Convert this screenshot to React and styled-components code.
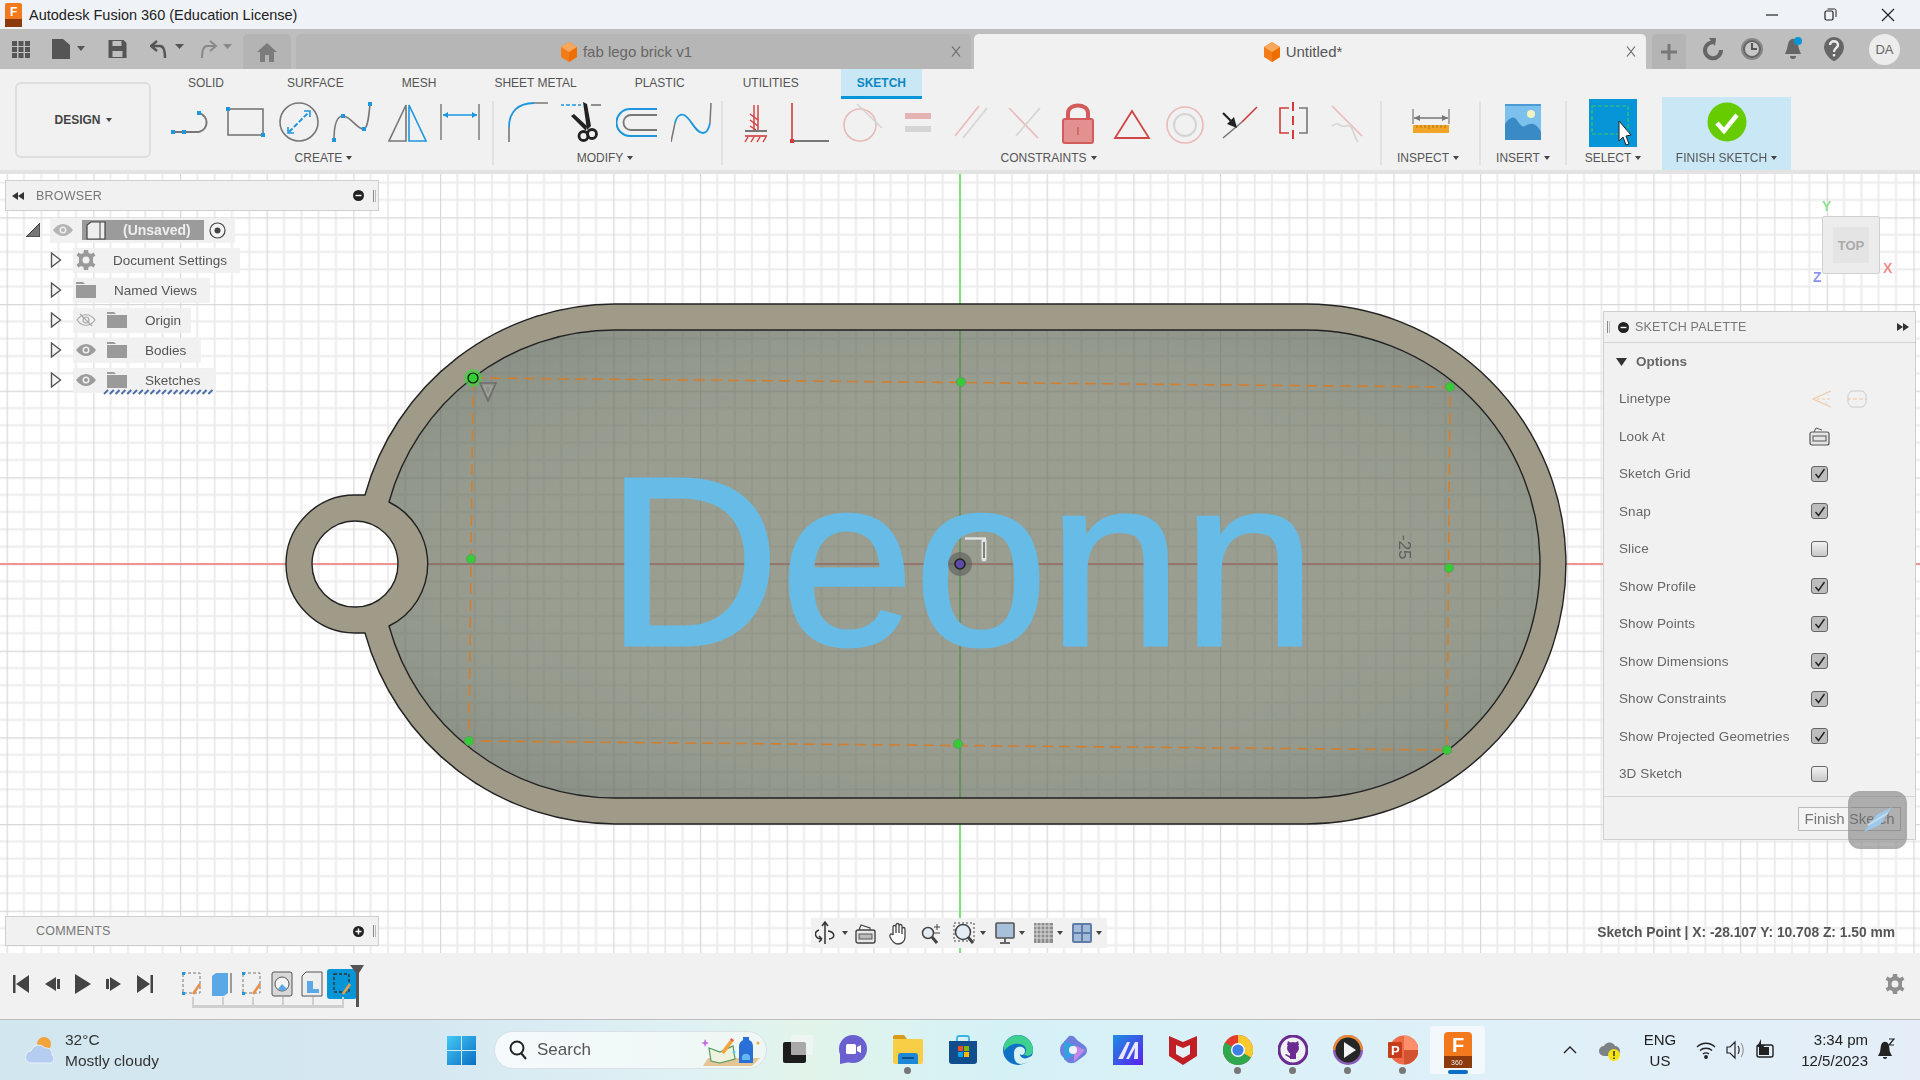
import React from "react";
import styled, { createGlobalStyle } from "styled-components";

const Reset = createGlobalStyle`
  html, body { margin: 0; padding: 0; width: 1920px; height: 1080px; overflow: hidden; }
  body { font-family: "Liberation Sans", Arial, sans-serif; color: #444; }
  * { box-sizing: border-box; }
`;

const Page = styled.div`
  width: 1920px;
  height: 1080px;
  display: flex;
  flex-direction: column;
`;

/* ---------- title bar ---------- */
const TitleBar = styled.div`
  height: 29px;
  flex: none;
  background: #eff3f8;
  display: flex;
  align-items: center;
  padding-left: 5px;
`;
const TitleText = styled.div`
  margin-left: 7px;
  font-size: 14.5px;
  color: #222;
`;
const WindowButtons = styled.div`
  margin-left: auto;
  padding-right: 3px;
  display: flex;
`;
const WindowButton = styled.div`
  width: 58px;
  height: 29px;
  display: flex;
  align-items: center;
  justify-content: center;
`;

/* ---------- document tabs ---------- */
const TabBar = styled.div`
  height: 40px;
  flex: none;
  background: #bebebe;
  display: flex;
  align-items: flex-end;
`;
const QuickTools = styled.div`
  width: 243px;
  height: 40px;
  flex: none;
  display: flex;
  align-items: center;
  padding-left: 12px;
`;
const QuickTool = styled.div`
  display: flex;
  align-items: center;
  margin-right: ${(p) => p.$gap || 0}px;
`;
const HomeTab = styled.div`
  width: 48px;
  height: 35px;
  background: #b4b4b4;
  border-radius: 5px 5px 0 0;
  margin-right: 5px;
  display: flex;
  align-items: center;
  justify-content: center;
`;
const DocTab = styled.div`
  width: ${(p) => p.$w}px;
  height: 35px;
  margin-right: ${(p) => p.$mr}px;
  padding-right: 15px;
  border-radius: 5px 5px 0 0;
  background: ${(p) => (p.$active ? "#f1f1f1" : "#b6b6b6")};
  color: ${(p) => (p.$active ? "#555" : "#666")};
  font-size: 15px;
  position: relative;
  display: flex;
  align-items: center;
  justify-content: center;
  gap: 5px;
`;
const TabClose = styled.span`
  position: absolute;
  right: 10px;
  top: 12px;
  display: flex;
`;
const NewTab = styled.div`
  width: 34px;
  height: 35px;
  background: #b4b4b4;
  border-radius: 4px 4px 0 0;
  margin-right: 4px;
  display: flex;
  align-items: center;
  justify-content: center;
`;
const TopIcons = styled.div`
  height: 40px;
  display: flex;
  align-items: center;
`;
const TopIcon = styled.div`
  width: 41px;
  display: flex;
  justify-content: center;
`;
const Avatar = styled.div`
  width: 31px;
  height: 31px;
  margin-left: 15px;
  border-radius: 50%;
  background: #ececec;
  color: #666;
  font-size: 13px;
  display: flex;
  align-items: center;
  justify-content: center;
`;

/* ---------- ribbon ---------- */
const Ribbon = styled.div`
  height: 105px;
  flex: none;
  background: #f1f1f1;
  border-bottom: 4px solid #e3e3e3;
  display: flex;
  padding-left: 15px;
`;
const DesignButton = styled.div`
  width: 136px;
  height: 76px;
  margin-top: 13px;
  border: 2px solid #dedede;
  border-radius: 6px;
  display: flex;
  align-items: center;
  justify-content: center;
  gap: 5px;
  font-size: 12px;
  font-weight: bold;
  color: #444;
`;
const RibbonMain = styled.div`
  margin-left: 14px;
  display: flex;
  flex-direction: column;
`;
const RibbonTabs = styled.div`
  height: 30px;
  display: flex;
  gap: 26px;
  padding-left: 7px;
`;
const RibbonTab = styled.div`
  height: 30px;
  padding: 0 16px;
  display: flex;
  align-items: center;
  font-size: 12px;
  color: ${(p) => (p.$active ? "#0c87c4" : "#555")};
  font-weight: ${(p) => (p.$active ? "bold" : "normal")};
  background: ${(p) => (p.$active ? "#c9e7f5" : "transparent")};
  border-bottom: 3px solid ${(p) => (p.$active ? "#0696d7" : "transparent")};

  &:first-child {
    margin-right: 5px;
  }
`;
const Groups = styled.div`
  height: 71px;
  display: flex;
`;
const Group = styled.div`
  width: ${(p) => p.$w}px;
  margin-left: ${(p) => p.$ml || 0}px;
  display: flex;
  flex-direction: column;
  ${(p) => p.$highlight && "background: #c9e7f5; margin-top: -2px; height: 73px; padding-top: 2px;"}
`;
const IconRow = styled.div`
  height: 48px;
  display: flex;
  justify-content: ${(p) => (p.$pad === undefined ? "center" : "flex-start")};
  padding-left: ${(p) => p.$pad || 0}px;
`;
const IconCell = styled.div`
  width: ${(p) => p.$w}px;
  display: flex;
  justify-content: center;
  padding-top: 1px;
`;
const GroupLabel = styled.div`
  flex: 1;
  display: flex;
  align-items: center;
  justify-content: center;
  gap: 4px;
  padding: 0 ${(p) => p.$pr || 0}px 2px 0;
  font-size: 12px;
  color: #555;
`;
const Caret = styled.span`
  width: 0;
  height: 0;
  border-left: 3.5px solid transparent;
  border-right: 3.5px solid transparent;
  border-top: 4.5px solid ${(p) => p.$color || "#444"};
  display: inline-block;
  margin-left: ${(p) => p.$ml || 0}px;
`;
const GroupDivider = styled.div`
  width: 2px;
  height: 64px;
  margin-left: ${(p) => p.$ml || 0}px;
  background: #e1e1e1;
  flex: none;
  margin-top: 2px;
`;

/* ---------- viewport ---------- */
const Viewport = styled.div`
  flex: 1;
  position: relative;
  background: #fff;
  overflow: hidden;
`;
const Scene = styled.svg`
  display: block;
`;
const Panel = styled.div`
  position: absolute;
  left: 5px;
  top: ${(p) => p.$top}px;
  width: 374px;
  height: ${(p) => p.$h}px;
  background: #f1f1f1;
  border: 1px solid #cfcfcf;
  display: flex;
  align-items: center;
  font-size: 12.5px;
  color: #777;
  padding: 0 2px 0 ${(p) => p.$pl}px;
`;
const PanelTitle = styled.span`
  margin-left: ${(p) => p.$ml || 0}px;
  flex: 1;
  letter-spacing: 0.2px;
`;
const Grip = styled.span`
  width: 3px;
  height: 12px;
  margin-left: 9px;
  border-left: 1px solid #888;
  border-right: 1px solid #bbb;
`;
const Tree = styled.div`
  position: absolute;
  left: 0;
  top: 41px;
  display: flex;
  flex-direction: column;
`;
const TreeRow = styled.div`
  height: 30px;
  display: flex;
  align-items: center;
  padding-left: ${(p) => p.$pl}px;
`;
const TreePill = styled.div`
  height: 25px;
  width: ${(p) => p.$w}px;
  margin-left: ${(p) => p.$ml}px;
  background: rgba(240, 240, 240, 0.92);
  display: flex;
  align-items: center;
  padding-left: 3px;
  gap: 11px;
  position: relative;
`;
const TreeLabel = styled.span`
  font-size: 13.5px;
  color: #555;
  margin-left: ${(p) => p.$ml}px;
`;
const RootBox = styled.div`
  width: 122px;
  height: 20px;
  margin-left: -2px;
  background: #9b9b9b;
  display: flex;
  align-items: center;
  padding-left: 4px;
  color: #eee;
  font-size: 14px;
  font-weight: bold;
  gap: 17px;
`;
const Squiggle = styled.svg`
  position: absolute;
  left: 30px;
  bottom: -2px;
`;
const NavCube = styled.div`
  position: absolute;
  left: 1822px;
  top: 42px;
  width: 58px;
  height: 58px;
  background: #ececec;
  border: 1px solid #d0d0d0;
  border-radius: 2px;
  display: flex;
  align-items: center;
  justify-content: center;
  font-size: 13px;
  font-weight: bold;
  color: #aaa;
`;
const CubeFace = styled.div`
  width: 36px;
  height: 36px;
  background: #e4e4e4;
  display: flex;
  align-items: center;
  justify-content: center;
`;
const AxisLetter = styled.span`
  position: absolute;
  left: ${(p) => p.$x}px;
  top: ${(p) => p.$y}px;
  font-size: 14px;
  font-weight: bold;
  color: ${(p) => p.$color};
`;
const Palette = styled.div`
  position: absolute;
  left: 1603px;
  top: 137px;
  width: 313px;
  height: 529px;
  background: #f1f1f1;
  border: 1px solid #cfcfcf;
  display: flex;
  flex-direction: column;
  color: #666;
`;
const PaletteHead = styled.div`
  height: 31px;
  flex: none;
  display: flex;
  align-items: center;
  padding: 0 6px 0 3px;
  border-bottom: 1px solid #d4d4d4;
  font-size: 12.5px;
  color: #777;
  letter-spacing: 0.2px;
`;
const OptionsHead = styled.div`
  height: 37px;
  flex: none;
  display: flex;
  align-items: center;
  padding-left: 12px;
  gap: 9px;
  font-size: 13.5px;
  font-weight: bold;
  color: #666;
`;
const OptionRow = styled.div`
  height: 37.5px;
  flex: none;
  display: flex;
  align-items: center;
  padding-left: 15px;
  font-size: 13.5px;
  letter-spacing: 0.1px;
  color: #666;
`;
const OptionLabel = styled.span`
  width: 192px;
  flex: none;
`;
const CheckBox = styled.span`
  width: 17px;
  height: 16px;
  border: 1px solid #666;
  border-radius: 3px;
  background: ${(p) => (p.$on ? "#bdbdbd" : "linear-gradient(#f2f2f2, #c8c8c8)")};
  display: flex;
  align-items: center;
  justify-content: center;
`;
const PaletteFoot = styled.div`
  flex: 1;
  margin-top: 3px;
  border-top: 1px solid #d4d4d4;
  display: flex;
  justify-content: flex-end;
  padding: 10px 14px 0 0;
`;
const FinishButton = styled.div`
  width: 103px;
  height: 24px;
  background: #f4f4f4;
  border: 1px solid #bbb;
  font-size: 15px;
  color: #777;
  display: flex;
  align-items: center;
  justify-content: center;
`;
const MarkingBadge = styled.div`
  position: absolute;
  left: 1848px;
  top: 617px;
  width: 59px;
  height: 58px;
  border-radius: 12px;
  background: rgba(105, 105, 105, 0.5);
  border: 3px solid rgba(170, 170, 170, 0.5);
  display: flex;
  align-items: center;
  justify-content: center;
`;
const NavBar = styled.div`
  position: absolute;
  left: 811px;
  top: 744px;
  width: 296px;
  height: 30px;
  background: #f1f1f1;
  display: flex;
  align-items: center;
  padding-left: 4px;
`;
const NavItem = styled.div`
  width: ${(p) => p.$w}px;
  flex: none;
  display: flex;
  align-items: center;
  gap: ${(p) => p.$gap || 4}px;
`;
const StatusText = styled.div`
  position: absolute;
  right: 25px;
  top: 751px;
  font-size: 13.8px;
  font-weight: bold;
  color: #555;
`;

/* ---------- timeline ---------- */
const Timeline = styled.div`
  height: 67px;
  flex: none;
  background: #f1f1f1;
  border-bottom: 1px solid #bdbdbd;
  display: flex;
  align-items: center;
  position: relative;
  padding: 0 15px 4px 5px;
`;
const PlayCell = styled.div`
  width: 31px;
  display: flex;
  justify-content: center;
`;
const Features = styled.div`
  margin-left: 17px;
  display: flex;
`;
const Feature = styled.div`
  width: 30px;
  height: 30px;
  display: flex;
  align-items: center;
  justify-content: center;
  background: ${(p) => (p.$active ? "#0696d7" : "transparent")};
  border-radius: ${(p) => (p.$active ? "3px" : 0)};
`;
const Bracket = styled.div`
  position: absolute;
  left: 192px;
  top: 44px;
  width: 152px;
  height: 11px;
  border-bottom: 3px solid #cfcfcf;
  background: repeating-linear-gradient(90deg, #cfcfcf 0 2px, transparent 2px 30px);
`;
const PlayHead = styled.svg`
  position: absolute;
  left: 350px;
  top: 12px;
`;
const TimelineGear = styled.div`
  margin-left: auto;
  display: flex;
`;

/* ---------- taskbar ---------- */
const Taskbar = styled.div`
  height: 60px;
  flex: none;
  background: linear-gradient(90deg, #d2e6f0 0%, #d5e8f2 22%, #dff1f3 36%, #e2f4ea 42%, #d4f1f6 52%, #dcf0f8 70%, #e5eef8 100%);
  display: flex;
  align-items: center;
  color: #222;
`;
const Weather = styled.div`
  width: 447px;
  flex: none;
  display: flex;
  align-items: center;
  padding-left: 25px;
  gap: 8px;
`;
const WeatherText = styled.div`
  font-size: 15.5px;
  line-height: 21px;
  color: #333;
`;
const SearchPill = styled.div`
  width: 273px;
  height: 38px;
  margin: 0 3px 0 18px;
  border-radius: 19px;
  background: linear-gradient(90deg, #f5fafc, #eef7f4);
  border: 1px solid #d8e2e6;
  display: flex;
  align-items: center;
  padding-left: 14px;
  gap: 10px;
  font-size: 17px;
  color: #555;
  position: relative;
`;
const SearchArt = styled.svg`
  position: absolute;
  right: 0;
  top: 1px;
`;
const TaskCell = styled.div`
  width: 55px;
  height: 48px;
  flex: none;
  display: flex;
  align-items: center;
  justify-content: center;
  position: relative;
  border-radius: 4px;
  background: ${(p) => (p.$active ? "#f2f8fb" : "transparent")};
  ${(p) =>
    p.$dot &&
    `&::after {
      content: "";
      position: absolute;
      bottom: 0;
      left: 50%;
      width: ${p.$active ? 20 : 7}px;
      height: ${p.$active ? 4 : 7}px;
      margin-left: ${p.$active ? -10 : -3.5}px;
      border-radius: 4px;
      background: ${p.$active ? "#0a6fc4" : "#777"};
    }`}
`;
const Tray = styled.div`
  width: 370px;
  margin-left: auto;
  flex: none;
  display: flex;
  align-items: center;
`;
const TrayCell = styled.div`
  width: ${(p) => p.$w}px;
  flex: none;
  display: flex;
  flex-direction: column;
  align-items: ${(p) => p.$align || "center"};
  justify-content: center;
  font-size: 15px;
  line-height: 21px;
  color: #222;
`;

/* ---------- drawings ---------- */
const Ico = ({ w = 44, h = 44, children, vb }) => (
  <svg width={w} height={h} viewBox={vb || `0 0 ${w} ${h}`} fill="none">
    {children}
  </svg>
);
const BLUE = "#1e96e0";
const GREY = "#777";
const Dot = ({ x, y }) => <rect x={x - 2} y={y - 2} width="4" height="4" fill={BLUE} />;

const LineIcon = () => (
  <Ico>
    <path d="M3 32H29" stroke={GREY} strokeWidth="2" />
    <path d="M29 13A11 10 0 0 1 29 32" stroke={GREY} strokeWidth="2" />
    <Dot x={3} y={32} /><Dot x={14} y={32} /><Dot x={29} y={13} />
  </Ico>
);
const RectIcon = () => (
  <Ico>
    <rect x="4" y="9" width="35" height="26" stroke={GREY} strokeWidth="1.6" />
    <Dot x={4} y={9} /><Dot x={39} y={35} />
  </Ico>
);
const CircleIcon = () => (
  <Ico>
    <circle cx="22" cy="22" r="19" stroke={GREY} strokeWidth="1.6" />
    <path d="M12 32L32 12" stroke={BLUE} strokeWidth="2" strokeDasharray="5 2" />
    <path d="M27 11H33V17M11 27V33H17" stroke={BLUE} strokeWidth="1.6" />
  </Ico>
);
const SplineIcon = () => (
  <Ico>
    <path d="M3 40C3 24 6 16 12 16C20 16 26 30 33 29C37 28 38 14 39 4" stroke={GREY} strokeWidth="1.6" />
    <Dot x={3} y={40} /><Dot x={12} y={16} /><Dot x={33} y={29} /><Dot x={39} y={4} />
  </Ico>
);
const MirrorIcon = () => (
  <Ico>
    <path d="M21 5L4 41H21Z" stroke={GREY} strokeWidth="1.6" />
    <path d="M24 5L41 41H24Z" stroke={BLUE} strokeWidth="1.6" />
  </Ico>
);
const DimensionIcon = () => (
  <Ico>
    <path d="M3 4V40M41 4V40" stroke={GREY} strokeWidth="1.4" />
    <path d="M5 15H39" stroke={BLUE} strokeWidth="1.6" />
    <path d="M5 15L10 12V18ZM39 15L34 12V18Z" fill={BLUE} />
  </Ico>
);
const FilletIcon = () => (
  <Ico>
    <path d="M3 27V42M28 3H42" stroke={GREY} strokeWidth="1.6" />
    <path d="M3 27C3 12 12 3 28 3" stroke={BLUE} strokeWidth="1.8" />
  </Ico>
);
const TrimIcon = () => (
  <Ico>
    <path d="M-1 5H20" stroke={BLUE} strokeWidth="1.6" strokeDasharray="4 2" />
    <path d="M30 5H40" stroke={GREY} strokeWidth="1.6" />
    <path d="M22 2L26 4L30 26L26 30Z" fill="#222" />
    <path d="M10 16L13 14L26 26L25 31Z" fill="#222" />
    <circle cx="22.500" cy="36" r="4.500" stroke="#222" strokeWidth="2.8" />
    <circle cx="31" cy="34" r="4.500" stroke="#222" strokeWidth="2.8" />
  </Ico>
);
const OffsetIcon = () => (
  <Ico>
    <path d="M41 9H14A13.500 13.500 0 0 0 14 36H41" stroke={BLUE} strokeWidth="2" />
    <path d="M41 15H15A7.500 7.500 0 0 0 15 30H41" stroke={GREY} strokeWidth="1.8" />
  </Ico>
);
const SplineEditIcon = () => (
  <Ico>
    <path d="M0 42L4 23M39 23L40 3" stroke={GREY} strokeWidth="1.5" />
    <path d="M4 23C6 15 10 14 13 15C20 18 24 33 32 33C36 33 38 28 39 23" stroke={BLUE} strokeWidth="1.8" />
  </Ico>
);
const FixIcon = () => (
  <Ico>
    <path d="M20 5V30M24 5V30" stroke="#d43a3a" strokeWidth="1.4" />
    <path d="M16 14L24 20M16 20L24 26M16 26L22 30" stroke="#d43a3a" strokeWidth="1.4" />
    <path d="M11 31H33" stroke={GREY} strokeWidth="2" />
    <path d="M11 36H33" stroke="#d43a3a" strokeWidth="1.6" />
    <path d="M14 37L11 42M20 37L17 42M26 37L23 42M32 37L29 42" stroke="#d43a3a" strokeWidth="1.4" />
  </Ico>
);
const PerpIcon = () => (
  <Ico>
    <path d="M4 3V41" stroke="#d43a3a" strokeWidth="1.6" />
    <path d="M5 41H41" stroke={GREY} strokeWidth="2" />
    <rect x="2" y="39" width="4" height="4" fill="#d43a3a" />
  </Ico>
);
const TangentIcon = () => (
  <Ico>
    <circle cx="19" cy="25" r="16" stroke="#eab9b9" strokeWidth="1.6" />
    <path d="M16 4L41 28" stroke="#d4d4d4" strokeWidth="1.6" />
  </Ico>
);
const EqualIcon = () => (
  <Ico>
    <rect x="10" y="13" width="26" height="6" fill="#e5b3b3" />
    <rect x="10" y="26" width="26" height="6" fill="#d5d5d5" />
  </Ico>
);
const ParallelIcon = () => (
  <Ico>
    <path d="M6 36L30 6" stroke="#eab9b9" strokeWidth="1.6" />
    <path d="M14 38L38 8" stroke="#d4d4d4" strokeWidth="1.6" />
  </Ico>
);
const CrossIcon = () => (
  <Ico>
    <path d="M7 8L36 38" stroke="#eab9b9" strokeWidth="1.6" />
    <path d="M38 8L14 36" stroke="#d4d4d4" strokeWidth="1.6" />
  </Ico>
);
const LockIcon = () => (
  <Ico>
    <path d="M12 20V13C12 3 32 3 32 13V20" stroke="#d35b5b" strokeWidth="4" />
    <rect x="7" y="19" width="30" height="24" rx="2" fill="#e29090" stroke="#d35b5b" strokeWidth="2" />
    <path d="M22 27V35" stroke="#c04a4a" strokeWidth="1" />
  </Ico>
);
const TriangleIcon = () => (
  <Ico>
    <path d="M22 11L39 38H5Z" stroke="#d04545" strokeWidth="1.8" />
  </Ico>
);
const ConcentricIcon = () => (
  <Ico>
    <circle cx="22" cy="25" r="18" stroke="#eab9b9" strokeWidth="1.6" />
    <circle cx="22" cy="25" r="11" stroke="#d4d4d4" strokeWidth="2" />
  </Ico>
);
const MidpointIcon = () => (
  <Ico>
    <path d="M6 38L25 22" stroke={GREY} strokeWidth="1.6" />
    <path d="M25 22L40 7" stroke="#d43a3a" strokeWidth="1.6" />
    <path d="M6 13L14 21" stroke="#222" strokeWidth="2.2" />
    <path d="M20 28L10 24L17 17Z" fill="#222" />
  </Ico>
);
const SymmetryIcon = () => (
  <Ico>
    <path d="M18 8H9V33H18" stroke="#d43a3a" strokeWidth="1.6" />
    <path d="M28 8H36V33H28" stroke={GREY} strokeWidth="1.6" />
    <path d="M22 2V42" stroke="#d43a3a" strokeWidth="2" strokeDasharray="9 5" />
  </Ico>
);
const CurvatureIcon = () => (
  <Ico>
    <path d="M8 6L38 36" stroke="#eab9b9" strokeWidth="1.6" />
    <path d="M8 26C16 20 14 28 22 26C30 24 28 34 34 42" stroke="#d4d4d4" strokeWidth="1.6" />
  </Ico>
);
const RulerIcon = () => (
  <Ico>
    <path d="M4 9V24M40 9V24" stroke={GREY} strokeWidth="1.2" />
    <path d="M5 18H39" stroke={GREY} strokeWidth="1.4" />
    <path d="M5 18L11 15V21ZM39 18L33 15V21Z" fill={GREY} />
    <rect x="4" y="25" width="36" height="8" fill="#f0a526" />
    <path d="M8 25V28M12 25V28M16 25V28M20 25V29M24 25V28M28 25V28M32 25V28M36 25V28" stroke="#9a6a10" strokeWidth=".8" />
  </Ico>
);
const PictureIcon = () => (
  <Ico>
    <rect x="4" y="4" width="36" height="36" fill="#7cc0ee" />
    <rect x="4" y="4" width="36" height="2" fill="#4d9bd6" />
    <circle cx="30" cy="14" r="4" fill="#f4f2c0" />
    <path d="M4 40V24C8 18 12 16 15 19C18 22 20 28 24 26C28 24 34 20 40 32V40Z" fill="#3a8ac6" />
  </Ico>
);
const SelectIcon = () => (
  <Ico w={48} h={48}>
    <rect x="0" y="0" width="48" height="48" fill="#0696d7" />
    <rect x="3" y="7" width="36" height="28" stroke="#3fc46a" strokeWidth="1.2" strokeDasharray="4 2" />
    <path d="M30 22V42L34 38L37 46L40 45L37 37L42 36Z" fill="#fff" stroke="#222" strokeWidth="1" />
  </Ico>
);
const FinishIcon = () => (
  <Ico w={40} h={44}>
    <circle cx="20" cy="22" r="19.500" fill="#66cc00" />
    <path d="M10 23L17 31L30 15" stroke="#fff" strokeWidth="4.5" />
  </Ico>
);

const Cube = ({ s = 20 }) => (
  <svg width={s * 0.9} height={s} viewBox="0 0 18 20">
    <path d="M9 0L17 5V15L9 20L1 15V5Z" fill="#f07d1a" />
    <path d="M9 10L17 5V15L9 20Z" fill="#ee6e00" />
    <path d="M9 0L17 5L9 10L1 5Z" fill="#f9a75c" />
  </svg>
);
const CloseX = () => (
  <svg width="10" height="11" viewBox="0 0 10 11">
    <path d="M1 0.5L9 10.5M9 0.5L1 10.5" stroke="#666" strokeWidth="1.2" />
  </svg>
);
const Eye = ({ off, c = "#9c9c9c" }) => (
  <svg width="20" height="14" viewBox="0 0 20 14" fill="none">
    {off ? (
      <>
        <path d="M1 7C6 0 14 0 19 7C14 14 6 14 1 7Z" stroke="#a8a8a8" strokeWidth="1.2" />
        <circle cx="10" cy="7" r="3" stroke="#a8a8a8" strokeWidth="1.2" />
        <path d="M4 1L16 13" stroke="#a8a8a8" strokeWidth="1.2" />
      </>
    ) : (
      <>
        <path d="M0 7C6 -1 14 -1 20 7C14 15 6 15 0 7Z" fill={c} />
        <circle cx="10" cy="7" r="3.500" fill="#eee" />
        <circle cx="10" cy="7" r="2" fill={c} />
      </>
    )}
  </svg>
);
const Folder = () => (
  <svg width="20" height="16" viewBox="0 0 20 16">
    <path d="M0 0H7L9 2H0ZM0 3H20V16H0Z" fill="#9a9a9a" />
  </svg>
);
const GearIcon = ({ s = 20, c = "#9a9a9a" }) => (
  <svg width={s} height={s} viewBox="0 0 20 20">
    <path
      fill={c}
      fillRule="evenodd"
      d="M8 0H12L12.600 3L15 4L17.600 2.400L19.400 5.400L17 7.200V12.800L19.400 14.600L17.600 17.600L15 16L12.600 17L12 20H8L7.400 17L5 16L2.400 17.600L.6 14.600L3 12.800V7.200L.6 5.400L2.400 2.400L5 4L7.400 3ZM10 6.500A3.500 3.500 0 1 0 10 13.500A3.500 3.500 0 1 0 10 6.500Z"
    />
  </svg>
);
const Arrow = () => (
  <svg width="12" height="16" viewBox="0 0 12 16" fill="none">
    <path d="M1.500 1L10.500 8L1.500 15Z" stroke="#555" strokeWidth="1.4" fill="#f4f4f4" />
  </svg>
);
const MinusDisc = ({ plus }) => (
  <svg width="11" height="11" viewBox="0 0 11 11" style={{ flex: "none" }}>
    <circle cx="5.500" cy="5.500" r="5.500" fill="#222" />
    <path d={plus ? "M2.500 5.500H8.500M5.500 2.500V8.500" : "M2.500 5.500H8.500"} stroke="#fff" strokeWidth="1.4" />
  </svg>
);
const DoubleArrow = ({ left }) => (
  <svg width="12" height="8" viewBox="0 0 12 8">
    <path d={left ? "M6 0V8L0 4ZM12 0V8L6 4Z" : "M0 0V8L6 4ZM6 0V8L12 4Z"} fill="#333" />
  </svg>
);
const CheckMark = () => (
  <svg width="12" height="11" viewBox="0 0 12 11" fill="none">
    <path d="M1.500 6L4.500 9.500L10.500 1" stroke="#222" strokeWidth="1.4" />
  </svg>
);

const createIcons = [LineIcon, RectIcon, CircleIcon, SplineIcon, MirrorIcon, DimensionIcon];
const modifyIcons = [FilletIcon, TrimIcon, OffsetIcon, SplineEditIcon];
const constraintIcons = [
  FixIcon, PerpIcon, TangentIcon, EqualIcon, ParallelIcon, CrossIcon,
  LockIcon, TriangleIcon, ConcentricIcon, MidpointIcon, SymmetryIcon, CurvatureIcon,
];
const ribbonTabs = ["SOLID", "SURFACE", "MESH", "SHEET METAL", "PLASTIC", "UTILITIES", "SKETCH"];

const options = [
  { label: "Sketch Grid", on: true },
  { label: "Snap", on: true },
  { label: "Slice", on: false },
  { label: "Show Profile", on: true },
  { label: "Show Points", on: true },
  { label: "Show Dimensions", on: true },
  { label: "Show Constraints", on: true },
  { label: "Show Projected Geometries", on: true },
  { label: "3D Sketch", on: false },
];

const HOLLOW =
  "M389 502A234 234 0 0 1 615 330H1306A234 234 0 0 1 1306 798H615A234 234 0 0 1 389 626A69 69 0 0 0 389 502Z";

const Sketch = () => (
  <Scene width="1920" height="779" viewBox="0 174 1920 779">
    <defs>
      <pattern id="grid" width="86.67" height="86.67" patternUnits="userSpaceOnUse" patternTransform="translate(960 564)">
        {[17.33, 34.67, 52, 69.33].map((v) => (
          <g key={v}>
            <path d={`M${v} 0V86.67`} stroke="#ececec" strokeWidth="2" />
            <path d={`M0 ${v}H86.67`} stroke="#ececec" strokeWidth="2" />
          </g>
        ))}
        <path d="M0 0V86.67M0 0H86.67" stroke="#d8d8d8" strokeWidth="2.4" />
      </pattern>
      <radialGradient id="hollow" cx="0.5" cy="0.5" r="0.6">
        <stop offset="0.6" stopColor="#9b9f92" />
        <stop offset="0.82" stopColor="#92978b" />
        <stop offset="1" stopColor="#82897f" />
      </radialGradient>
    </defs>
    <rect x="0" y="174" width="1920" height="779" fill="url(#grid)" />
    <path d="M960 174V953" stroke="#7ce37c" strokeWidth="2" />
    <path d="M0 564H1920" stroke="#ef9494" strokeWidth="2" />
    <path d={HOLLOW} fill="url(#hollow)" style={{ mixBlendMode: "multiply" }} />
    <path d={HOLLOW} fill="#999d90" opacity="0.4" />
    <path
      fillRule="evenodd"
      fill="#a09a88"
      stroke="#222"
      strokeWidth="1.4"
      d={`M365 495A260 260 0 0 1 615 304H1306A260 260 0 0 1 1306 824H615A260 260 0 0 1 365 633L355 633A69 69 0 0 1 355 495Z
         M355 521A43 43 0 1 0 355 607A43 43 0 1 0 355 521Z ${HOLLOW}`}
    />
    <text
      x="606"
      y="645"
      fontFamily="Liberation Sans, Arial, sans-serif"
      fontSize="241"
      fill="#66bce6"
      stroke="#66bce6"
      strokeWidth="3"
    >
      Deonn
    </text>
    <path
      d="M473 378L1450 387L1447 750L469 741Z"
      fill="none"
      stroke="#d07f30"
      strokeWidth="1.6"
      strokeDasharray="11 6"
    />
    <circle cx="473" cy="378" r="9" fill="#3fd13f" opacity="0.7" />
    <circle cx="473" cy="378" r="5" fill="#2fd02f" stroke="#111" strokeWidth="1.2" />
    {[
      [961, 382], [1450, 387], [471, 559], [1449, 568], [469, 741], [958, 744], [1447, 750],
    ].map(([x, y]) => (
      <circle key={x + y} cx={x} cy={y} r="4.500" fill="#35cc35" stroke="#5f9a5f" strokeWidth="1" />
    ))}
    <path d="M480 383H496L488 401Z" fill="none" stroke="#6d6d6d" strokeWidth="1.6" />
    <path d="M484 386H492L488 396Z" fill="none" stroke="#a5a8a0" strokeWidth="1" />
    <circle cx="960" cy="564" r="12" fill="#63665f" opacity="0.7" />
    <circle cx="960" cy="564" r="5" fill="#5d4ba8" stroke="#222" strokeWidth="1.6" />
    <path d="M965 538.500H986" stroke="#dfe5e8" strokeWidth="2.4" />
    <path d="M984 541V559" stroke="#dfe5e8" strokeWidth="5" strokeLinecap="round" />
    <path d="M984 542V558" stroke="#7b7f78" strokeWidth="2" />
    <text
      transform="translate(1399 535) rotate(90)"
      fontFamily="Liberation Sans, Arial, sans-serif"
      fontSize="17"
      fill="#5c5f5a"
    >
      -25
    </text>
  </Scene>
);

const WinLogo = () => (
  <svg width="29" height="29" viewBox="0 0 29 29">
    <defs>
      <linearGradient id="win" x1="0" y1="0" x2="1" y2="1">
        <stop offset="0" stopColor="#43c8f5" />
        <stop offset="1" stopColor="#0a6fc4" />
      </linearGradient>
    </defs>
    <path d="M0 0H14V14H0ZM15 0H29V14H15ZM0 15H14V29H0ZM15 15H29V29H15Z" fill="url(#win)" />
  </svg>
);
const Tile = ({ children, w = 30, h = 30, vb = "0 0 30 30" }) => (
  <svg width={w} height={h} viewBox={vb}>
    {children}
  </svg>
);
const taskIcons = [
  {
    node: (
      <Tile>
        <rect x="0" y="7" width="23" height="21" rx="2" fill="#1c1c1c" />
        <rect x="8" y="0" width="22" height="20" rx="1" fill="#f6f6f6" opacity="0.65" />
      </Tile>
    ),
  },
  {
    node: (
      <Tile>
        <circle cx="15" cy="14" r="14" fill="#6a60d0" />
        <path d="M2 18L2 29L12 27Z" fill="#6a60d0" />
        <rect x="8" y="9" width="10" height="10" rx="1.500" fill="#fff" />
        <path d="M19 12L23 10V18L19 16Z" fill="#fff" />
      </Tile>
    ),
  },
  {
    dot: true,
    node: (
      <Tile>
        <path d="M0 2A2 2 0 0 1 2 0H11L14 4H0Z" fill="#d99a1c" />
        <rect x="0" y="4" width="30" height="25" rx="2" fill="#f7ce46" />
        <path d="M5 29V21A3 3 0 0 1 8 18H22A3 3 0 0 1 25 21V29Z" fill="#1e88d8" />
        <rect x="9" y="22" width="12" height="2" fill="#0c4f8a" />
      </Tile>
    ),
  },
  {
    node: (
      <Tile>
        <path d="M9 6V3A2 2 0 0 1 11 1H19A2 2 0 0 1 21 3V6" fill="none" stroke="#3ab4e8" strokeWidth="1.800" />
        <path d="M1 6H29V26A3 3 0 0 1 26 29H4A3 3 0 0 1 1 26Z" fill="#0f4d8c" />
        <rect x="10" y="11" width="5" height="5" fill="#f25022" />
        <rect x="16" y="11" width="5" height="5" fill="#7fba00" />
        <rect x="10" y="17" width="5" height="5" fill="#00a4ef" />
        <rect x="16" y="17" width="5" height="5" fill="#ffb900" />
      </Tile>
    ),
  },
  {
    node: (
      <Tile>
        <circle cx="15" cy="15" r="15" fill="#0f72c4" />
        <path d="M1 10A15 15 0 0 1 30 15C30 20 25 22 21 20C24 17 24 12 20 10C14 7 6 9 1 16Z" fill="#3ed08e" />
        <path d="M11 18C11 13 15 11 19 12C22 13 23 16 21 19C19 21 17 19 17 19C17 23 22 26 30 20C27 27 20 31 14 28C11 25 11 22 11 18Z" fill="#d6f2f6" />
      </Tile>
    ),
  },
  {
    node: (
      <Tile>
        <path d="M11 1C15 0 17 2 19 5L26 10C30 13 30 18 26 21L19 26C16 29 11 29 8 26L5 22C1 19 1 11 5 8Z" fill="#6f7fe0" />
        <path d="M6 6L16 10V20L6 25Z" fill="#37a0e0" />
        <path d="M16 10L27 15L16 27Z" fill="#c08ae6" />
        <circle cx="15" cy="15" r="4" fill="#eef4fa" />
      </Tile>
    ),
  },
  {
    node: (
      <Tile>
        <defs>
          <linearGradient id="ma" x1="0" y1="0" x2="1" y2="1">
            <stop offset="0" stopColor="#1b8fe0" />
            <stop offset="1" stopColor="#5c1ff0" />
          </linearGradient>
        </defs>
        <rect width="30" height="30" fill="url(#ma)" />
        <path d="M5 24L14 7H17L10 24ZM13 24L22 7H25V24H21L22 13L16 24Z" fill="#e9e6ff" />
      </Tile>
    ),
  },
  {
    node: (
      <Tile>
        <path d="M1 1L15 7L29 1V21L15 30L1 21Z" fill="#c01f26" />
        <path d="M8 10L15 13L22 10V19L15 23L8 19Z" fill="#e4f0f5" />
      </Tile>
    ),
  },
  {
    dot: true,
    node: (
      <Tile>
        <circle cx="15" cy="15" r="15" fill="#e33b2e" />
        <path d="M15 15L2 22.500A15 15 0 0 1 2 7.500Z" fill="#2fa84f" />
        <path d="M15 15L2 22.500A15 15 0 0 0 15 30A15 15 0 0 0 28 22.500Z" fill="#2fa84f" />
        <path d="M15 0A15 15 0 0 1 28 22.500L15 15Z" fill="#f8c92e" />
        <circle cx="15" cy="15" r="7" fill="#fff" />
        <circle cx="15" cy="15" r="5.600" fill="#3f7fe8" />
      </Tile>
    ),
  },
  {
    dot: true,
    node: (
      <Tile>
        <circle cx="15" cy="15" r="14" fill="#eef2f5" stroke="#6a2c91" strokeWidth="3" />
        <circle cx="15" cy="13" r="6" fill="#6a2c91" />
        <path d="M9 10L10 6L13 8H17L20 6L21 10ZM12 17V24H18V17ZM8 19L12 21V23L7 20Z" fill="#6a2c91" />
      </Tile>
    ),
  },
  {
    dot: true,
    node: (
      <Tile>
        <circle cx="15" cy="15" r="15" fill="#8a5cb8" />
        <path d="M15 0A15 15 0 0 1 30 15L0 15A15 15 0 0 1 15 0Z" fill="#ef8a36" />
        <circle cx="15" cy="15" r="12.500" fill="#262626" />
        <path d="M11 7L23 15L11 23Z" fill="#f4f4f4" />
      </Tile>
    ),
  },
  {
    dot: true,
    node: (
      <Tile>
        <circle cx="16" cy="15" r="14.500" fill="#ed6c47" />
        <path d="M16 .5A14.500 14.500 0 0 1 30.500 15H16Z" fill="#ff8f6b" />
        <path d="M16 15H30.500A14.500 14.500 0 0 1 16 29.500Z" fill="#d35230" />
        <rect x="0" y="7" width="14" height="16" rx="1" fill="#c43e1c" />
        <text x="3" y="20" fontSize="13" fontWeight="bold" fill="#fff" fontFamily="Liberation Sans, Arial, sans-serif">P</text>
      </Tile>
    ),
  },
  {
    dot: true,
    active: true,
    node: (
      <Tile w={28} h={36} vb="0 0 28 36">
        <path d="M0 4A4 4 0 0 1 4 0H24A4 4 0 0 1 28 4V36H0Z" fill="#f27a1c" />
        <rect x="0" y="24" width="28" height="12" fill="#8c3a0c" />
        <text x="8" y="20" fontSize="20" fontWeight="bold" fill="#fff" fontFamily="Liberation Sans, Arial, sans-serif">F</text>
        <text x="7" y="33" fontSize="7" fill="#eee" fontFamily="Liberation Sans, Arial, sans-serif">360</text>
      </Tile>
    ),
  },
];

function App() {
  return (
    <Page>
      <Reset />
      <TitleBar>
        <svg width="17" height="24" viewBox="0 0 17 24">
          <rect width="17" height="24" rx="2" fill="#f27a1c" />
          <rect y="16" width="17" height="8" fill="#8c3a0c" />
          <text x="5" y="13" fontSize="12" fontWeight="bold" fill="#fff" fontFamily="Liberation Sans, Arial, sans-serif">F</text>
        </svg>
        <TitleText>Autodesk Fusion 360 (Education License)</TitleText>
        <WindowButtons>
          <WindowButton>
            <svg width="12" height="2"><path d="M0 1H12" stroke="#222" strokeWidth="1.2" /></svg>
          </WindowButton>
          <WindowButton>
            <svg width="13" height="13" fill="none"><rect x="1" y="3" width="8" height="9" rx="1.500" stroke="#222" strokeWidth="1.2" /><path d="M3.500 1H10.500A1.500 1.500 0 0 1 12 2.500V9" stroke="#222" /></svg>
          </WindowButton>
          <WindowButton>
            <svg width="14" height="14"><path d="M1 1L13 13M13 1L1 13" stroke="#222" strokeWidth="1.2" /></svg>
          </WindowButton>
        </WindowButtons>
      </TitleBar>

      <TabBar>
        <QuickTools>
          <QuickTool $gap={22}>
            <svg width="18" height="17" viewBox="0 0 18 17" fill="#555">
              {[0, 6.5, 13].map((x) =>
                [0, 6, 12].map((y) => <rect key={x + "-" + y} x={x} y={y} width="5" height="5" />)
              )}
            </svg>
          </QuickTool>
          <QuickTool $gap={22}>
            <svg width="34" height="20" viewBox="0 0 34 20" fill="#555">
              <path d="M0 0H11L18 6V20H0Z" />
              <path d="M25 7H33L29 12Z" />
            </svg>
          </QuickTool>
          <QuickTool $gap={23}>
            <svg width="19" height="18" viewBox="0 0 18 18" fill="#555">
              <path fillRule="evenodd" d="M0 0H15L18 3V18H0ZM4 1V6H13V1ZM4 11V17H14V11Z" />
            </svg>
          </QuickTool>
          <QuickTool $gap={15}>
            <svg width="35" height="20" viewBox="0 0 35 20" fill="none">
              <path d="M7 2L1 7L7 12M1 7H10C14 7 15 12 15 19" stroke="#555" strokeWidth="2.4" />
              <path d="M25 5H34L29.500 10Z" fill="#555" />
            </svg>
          </QuickTool>
          <QuickTool>
            <svg width="33" height="20" viewBox="0 0 33 20" fill="none">
              <path d="M10 2L16 7L10 12M16 7H7C3 7 2 12 2 19" stroke="#888" strokeWidth="2" />
              <path d="M23 5H32L27.500 10Z" fill="#888" />
            </svg>
          </QuickTool>
        </QuickTools>
        <HomeTab>
          <svg width="20" height="20" viewBox="0 0 20 20" fill="#7c7c7c">
            <path d="M10 1L20 10H17V20H12V13H8V20H3V10H0Z" />
          </svg>
        </HomeTab>
        <DocTab $w={675} $mr={3}>
          <Cube />
          fab lego brick v1
          <TabClose><CloseX /></TabClose>
        </DocTab>
        <DocTab $active $w={672} $mr={6}>
          <Cube />
          Untitled*
          <TabClose><CloseX /></TabClose>
        </DocTab>
        <NewTab>
          <svg width="16" height="16"><path d="M8 0V16M0 8H16" stroke="#777" strokeWidth="3" /></svg>
        </NewTab>
        <TopIcons>
          <TopIcon>
            <svg width="24" height="24" viewBox="0 0 24 24" fill="none" style={{ marginLeft: 4 }}>
              <path d="M14 5.500A8 8 0 1 0 20 13" stroke="#666" strokeWidth="4" />
              <path d="M8 1L15 1L14 9Z" fill="#666" />
            </svg>
          </TopIcon>
          <TopIcon>
            <svg width="22" height="22" viewBox="0 0 22 22" fill="none">
              <circle cx="11" cy="11" r="10" fill="#666" stroke="#888" strokeWidth="2" />
              <circle cx="11" cy="11" r="7" fill="#c8c8c8" />
              <path d="M11 5V11H16" stroke="#555" strokeWidth="2" />
            </svg>
          </TopIcon>
          <TopIcon>
            <svg width="20" height="24" viewBox="0 0 20 24">
              <path d="M9 2A2 2 0 0 1 11 2C15 3 15 8 16 12L18 17H2L4 12C5 8 5 3 9 2ZM7 19H13A3 3 0 0 1 7 19Z" fill="#666" />
              <circle cx="15" cy="4" r="4" fill="#0696d7" />
            </svg>
          </TopIcon>
          <TopIcon>
            <svg width="20" height="24" viewBox="0 0 20 24">
              <path d="M10 0A10 10 0 0 1 20 10C20 17 12 24 10 24C8 24 0 17 0 10A10 10 0 0 1 10 0Z" fill="#666" />
              <path d="M6 8C6 3 14 3 14 8C14 11 10 11 10 15" stroke="#eee" strokeWidth="2.4" fill="none" />
              <rect x="8.800" y="17" width="2.400" height="2.400" fill="#eee" />
            </svg>
          </TopIcon>
          <Avatar>DA</Avatar>
        </TopIcons>
      </TabBar>

      <Ribbon>
        <DesignButton>DESIGN <Caret /></DesignButton>
        <RibbonMain>
          <RibbonTabs>
            {ribbonTabs.map((t) => (
              <RibbonTab key={t} $active={t === "SKETCH"}>{t}</RibbonTab>
            ))}
          </RibbonTabs>
          <Groups>
            <Group $w={322}>
              <IconRow $pad={0}>
                {createIcons.map((I, i) => <IconCell key={i} $w={53.7}><I /></IconCell>)}
              </IconRow>
              <GroupLabel $pr={5}>CREATE <Caret /></GroupLabel>
            </Group>
            <GroupDivider $ml={5} />
            <Group $w={227}>
              <IconRow $pad={6}>
                {modifyIcons.map((I, i) => <IconCell key={i} $w={55}><I /></IconCell>)}
              </IconRow>
              <GroupLabel $pr={5}>MODIFY <Caret /></GroupLabel>
            </Group>
            <GroupDivider />
            <Group $w={657}>
              <IconRow $pad={6}>
                {constraintIcons.map((I, i) => <IconCell key={i} $w={53.7}><I /></IconCell>)}
              </IconRow>
              <GroupLabel $pr={6}>CONSTRAINTS <Caret /></GroupLabel>
            </Group>
            <GroupDivider />
            <Group $w={97}>
              <IconRow><IconCell $w={44}><RulerIcon /></IconCell></IconRow>
              <GroupLabel $pr={5}>INSPECT <Caret /></GroupLabel>
            </Group>
            <GroupDivider />
            <Group $w={84}>
              <IconRow><IconCell $w={44}><PictureIcon /></IconCell></IconRow>
              <GroupLabel>INSERT <Caret /></GroupLabel>
            </Group>
            <GroupDivider />
            <Group $w={92}>
              <IconRow><SelectIcon /></IconRow>
              <GroupLabel>SELECT <Caret /></GroupLabel>
            </Group>
            <Group $w={129} $ml={3} $highlight>
              <IconRow><IconCell $w={44}><FinishIcon /></IconCell></IconRow>
              <GroupLabel>FINISH SKETCH <Caret /></GroupLabel>
            </Group>
          </Groups>
        </RibbonMain>
      </Ribbon>

      <Viewport>
        <Sketch />

        <Panel $top={6} $h={31} $pl={6}>
          <DoubleArrow left />
          <PanelTitle $ml={12}>BROWSER</PanelTitle>
          <MinusDisc />
          <Grip />
        </Panel>
        <Tree>
          <TreeRow $pl={26}>
            <svg width="14" height="14" viewBox="0 0 14 14">
              <path d="M14 0V14H0Z" fill="#777" stroke="#333" />
            </svg>
            <TreePill $ml={10} $w={185}>
              <Eye c="#b4b4b4" />
              <RootBox>
                <svg width="20" height="19" viewBox="0 0 20 19" style={{ flex: "none" }}>
                  <path d="M5 1H19V18H1V4Z" fill="#eee" stroke="#444" strokeWidth="1.2" />
                  <path d="M14 1V18" stroke="#444" />
                </svg>
                (Unsaved)
              </RootBox>
              <svg width="17" height="17" viewBox="0 0 17 17" style={{ marginLeft: -6 }}>
                <circle cx="8.500" cy="8.500" r="7.500" fill="#f4f4f4" stroke="#444" strokeWidth="1.2" />
                <circle cx="8.500" cy="8.500" r="3" fill="#444" />
              </svg>
            </TreePill>
          </TreeRow>
          <TreeRow $pl={50}>
            <Arrow />
            <TreePill $ml={11} $w={167}>
              <GearIcon />
              <TreeLabel $ml={6}>Document Settings</TreeLabel>
            </TreePill>
          </TreeRow>
          <TreeRow $pl={50}>
            <Arrow />
            <TreePill $ml={11} $w={137}>
              <Folder />
              <TreeLabel $ml={7}>Named Views</TreeLabel>
            </TreePill>
          </TreeRow>
          <TreeRow $pl={50}>
            <Arrow />
            <TreePill $ml={11} $w={118}>
              <Eye off />
              <Folder />
              <TreeLabel $ml={7}>Origin</TreeLabel>
            </TreePill>
          </TreeRow>
          <TreeRow $pl={50}>
            <Arrow />
            <TreePill $ml={11} $w={128}>
              <Eye />
              <Folder />
              <TreeLabel $ml={7}>Bodies</TreeLabel>
            </TreePill>
          </TreeRow>
          <TreeRow $pl={50}>
            <Arrow />
            <TreePill $ml={11} $w={143}>
              <Eye />
              <Folder />
              <TreeLabel $ml={7}>Sketches</TreeLabel>
              <Squiggle width="110" height="6" viewBox="0 0 110 6">
                {Array.from({ length: 19 }, (_, i) => (
                  <path key={i} d={`M${i * 5.8 + 1} 5L${i * 5.8 + 5} 1`} stroke="#4f6fa8" strokeWidth="2" />
                ))}
              </Squiggle>
            </TreePill>
          </TreeRow>
        </Tree>

        <NavCube><CubeFace>TOP</CubeFace></NavCube>
        <AxisLetter $x={1822} $y={24} $color="#8fe08f">Y</AxisLetter>
        <AxisLetter $x={1883} $y={86} $color="#f08a8a">X</AxisLetter>
        <AxisLetter $x={1813} $y={95} $color="#8a94f0">Z</AxisLetter>

        <Palette>
          <PaletteHead>
            <Grip style={{ marginLeft: 0, marginRight: 8 }} />
            <MinusDisc />
            <PanelTitle $ml={6}>SKETCH PALETTE</PanelTitle>
            <DoubleArrow />
          </PaletteHead>
          <OptionsHead>
            <svg width="11" height="8" viewBox="0 0 11 8"><path d="M0 0H11L5.500 8Z" fill="#333" /></svg>
            Options
          </OptionsHead>
          <OptionRow>
            <OptionLabel>Linetype</OptionLabel>
            <svg width="22" height="20" viewBox="0 0 22 20" fill="none" style={{ marginRight: 14 }}>
              <path d="M20 2L2 10L20 18" stroke="#f0c9a8" strokeWidth="1.2" />
              <path d="M6 10H20" stroke="#f0c9a8" strokeDasharray="3 2" />
              <path d="M14 3L18 7M14 13L18 17" stroke="#ddd" />
            </svg>
            <svg width="20" height="18" viewBox="0 0 20 18" fill="none">
              <path d="M4 1H16L19 5V13L16 17H4L1 13V5Z" stroke="#ccc" />
              <path d="M0 9H20" stroke="#f0c9a8" strokeDasharray="4 2" />
            </svg>
          </OptionRow>
          <OptionRow>
            <OptionLabel>Look At</OptionLabel>
            <svg width="21" height="19" viewBox="0 0 21 19" fill="none" style={{ marginLeft: -2 }}>
              <rect x="1" y="5" width="19" height="13" rx="2" stroke="#555" strokeWidth="1.2" fill="#e4e4e4" />
              <rect x="4" y="9" width="13" height="5" stroke="#555" />
              <path d="M5 5L7 1M7 1L13 3" stroke="#555" />
            </svg>
          </OptionRow>
          {options.map((o) => (
            <OptionRow key={o.label}>
              <OptionLabel>{o.label}</OptionLabel>
              <CheckBox $on={o.on}>{o.on && <CheckMark />}</CheckBox>
            </OptionRow>
          ))}
          <PaletteFoot>
            <FinishButton>Finish Sketch</FinishButton>
          </PaletteFoot>
        </Palette>
        <MarkingBadge>
          <svg width="32" height="30" viewBox="0 0 32 30">
            <path d="M14 10L30 2L18 20L2 27Z" fill="#9cc8ea" />
            <path d="M6 20L26 8" stroke="#c9dcec" strokeWidth="2" />
          </svg>
        </MarkingBadge>

        <Panel $top={742} $h={30} $pl={30}>
          <PanelTitle>COMMENTS</PanelTitle>
          <MinusDisc plus />
          <Grip />
        </Panel>
        <NavBar>
          <NavItem $w={40} $gap={7}>
            <svg width="20" height="24" viewBox="0 0 20 24" fill="none" stroke="#333" strokeWidth="1.5" style={{ flex: "none" }}>
              <path d="M10 1V23M7 5L10 1L13 5" />
              <path d="M4 9C-2 11 0 18 7 18M13 10C20 11 21 17 14 18M7 18L4 15M7 18L4 21" />
            </svg>
            <Caret />
          </NavItem>
          <NavItem $w={33}>
            <svg width="21" height="21" viewBox="0 0 21 21" fill="none">
              <rect x="1" y="7" width="19" height="13" rx="2" fill="#e8e8e8" stroke="#444" strokeWidth="1.4" />
              <rect x="4" y="11" width="13" height="5" fill="#bcbcbc" stroke="#555" />
              <path d="M4 7L6 2L15 5V7" stroke="#444" strokeWidth="1.2" />
            </svg>
          </NavItem>
          <NavItem $w={33}>
            <svg width="20" height="23" viewBox="0 0 20 23" fill="#fff" stroke="#444" strokeWidth="1.3">
              <path d="M5 13V5A1.500 1.500 0 0 1 8 5V11V3A1.500 1.500 0 0 1 11 3V11V4A1.500 1.500 0 0 1 14 4V12V7A1.500 1.500 0 0 1 17 7V15C17 19 14 22 10 22C6 22 4 19 2 15C1 12 4 11 5 13Z" />
            </svg>
          </NavItem>
          <NavItem $w={32}>
            <svg width="20" height="21" viewBox="0 0 20 21" fill="none" stroke="#444" strokeWidth="1.5">
              <circle cx="7" cy="10" r="5.500" fill="#e3ecf2" />
              <path d="M11 14L16 20" strokeWidth="3" />
              <path d="M16 1V7M13 4H19M13 10H19" strokeWidth="1" />
            </svg>
          </NavItem>
          <NavItem $w={42} $gap={5}>
            <svg width="22" height="22" viewBox="0 0 22 22" fill="none" stroke="#444" style={{ flex: "none" }}>
              <rect x="1" y="1" width="20" height="18" strokeDasharray="2 2" strokeWidth="1" />
              <circle cx="10" cy="10" r="7.500" fill="#e3ecf2" strokeWidth="1.6" />
              <path d="M15 15L20 21" strokeWidth="3" />
            </svg>
            <Caret />
          </NavItem>
          <NavItem $w={39}>
            <svg width="20" height="22" viewBox="0 0 20 22" fill="none" style={{ flex: "none" }}>
              <rect x="1" y="1" width="18" height="15" rx="1" fill="#a9c0da" stroke="#555" strokeWidth="1.6" />
              <path d="M10 16V20M5 21H15" stroke="#666" strokeWidth="2" />
            </svg>
            <Caret />
          </NavItem>
          <NavItem $w={38}>
            <svg width="19" height="20" viewBox="0 0 19 20" fill="none" style={{ flex: "none" }}>
              <rect width="19" height="20" fill="#8d8d8d" />
              <path d="M3 0V20M7 0V20M11 0V20M15 0V20M0 3H19M0 7H19M0 11H19M0 15H19" stroke="#dcdcdc" strokeWidth="1" />
            </svg>
            <Caret />
          </NavItem>
          <NavItem $w={35}>
            <svg width="20" height="20" viewBox="0 0 20 20" style={{ flex: "none" }}>
              <rect width="20" height="20" rx="2" fill="#5f7ca8" />
              <path d="M2 2H9V9H2ZM11 2H18V9H11ZM2 11H9V18H2ZM11 11H18V18H11Z" fill="#a3bbd8" />
            </svg>
            <Caret />
          </NavItem>
        </NavBar>
        <StatusText>Sketch Point | X: -28.107 Y: 10.708 Z: 1.50 mm</StatusText>
      </Viewport>

      <Timeline>
        <PlayCell>
          <svg width="16" height="18" viewBox="0 0 16 18" fill="#444"><path d="M0 0H2.500V18H0ZM16 0V18L3 9Z" /></svg>
        </PlayCell>
        <PlayCell>
          <svg width="16" height="18" viewBox="0 0 16 18" fill="#444"><path d="M12 2V16L1 9ZM13 4H16V14H13Z" /></svg>
        </PlayCell>
        <PlayCell>
          <svg width="16" height="20" viewBox="0 0 16 20" fill="#444"><path d="M0 0L16 10L0 20Z" /></svg>
        </PlayCell>
        <PlayCell>
          <svg width="16" height="18" viewBox="0 0 16 18" fill="#444"><path d="M4 2V16L15 9ZM0 4H3V14H0Z" /></svg>
        </PlayCell>
        <PlayCell>
          <svg width="16" height="18" viewBox="0 0 16 18" fill="#444"><path d="M16 0H13.500V18H16ZM0 0V18L13 9Z" /></svg>
        </PlayCell>
        <Features>
          <Feature>
            <svg width="20" height="24" viewBox="0 0 20 24" fill="none">
              <rect x="1" y="1" width="17" height="20" stroke="#777" strokeDasharray="3 2" />
              <path d="M11 22L18 12" stroke="#e8904a" strokeWidth="2.600" />
              <rect x="0" y="0" width="3" height="3" fill={BLUE} /><rect x="0" y="20" width="3" height="3" fill={BLUE} />
            </svg>
          </Feature>
          <Feature>
            <svg width="22" height="26" viewBox="0 0 22 26">
              <path d="M1 5L5 2H17V22L13 25H1Z" fill="#5ba8e6" />
              <path d="M20 2V22" stroke="#444" />
            </svg>
          </Feature>
          <Feature>
            <svg width="20" height="24" viewBox="0 0 20 24" fill="none">
              <rect x="1" y="1" width="17" height="20" stroke="#777" strokeDasharray="3 2" />
              <path d="M11 22L18 12" stroke="#e8904a" strokeWidth="2.600" />
              <rect x="0" y="0" width="3" height="3" fill={BLUE} /><rect x="0" y="20" width="3" height="3" fill={BLUE} />
            </svg>
          </Feature>
          <Feature>
            <svg width="22" height="26" viewBox="0 0 22 26" fill="none">
              <rect x="1" y="1" width="20" height="24" rx="2" fill="#d8d8d8" stroke="#555" />
              <circle cx="11" cy="13" r="7" fill="#f4f4f4" stroke="#555" />
              <path d="M11 13L16 18A7 7 0 0 1 7 18Z" fill="#5ba8e6" />
            </svg>
          </Feature>
          <Feature>
            <svg width="22" height="26" viewBox="0 0 22 26" fill="none">
              <path d="M1 5L5 1H21V25H1Z" fill="#eee" stroke="#555" />
              <path d="M6 10H12V18H18V22H6Z" fill="#5ba8e6" />
            </svg>
          </Feature>
          <Feature $active>
            <svg width="20" height="24" viewBox="0 0 20 24" fill="none">
              <rect x="2" y="2" width="15" height="18" stroke="#333" strokeDasharray="3 2" strokeWidth="1.4" />
              <path d="M11 22L18 12" stroke="#e8a04a" strokeWidth="2.600" />
            </svg>
          </Feature>
        </Features>
        <Bracket />
        <PlayHead width="14" height="42" viewBox="0 0 14 42">
          <path d="M0 0H14L9 8V42H6V8Z" fill="#555" />
        </PlayHead>
        <TimelineGear><GearIcon s={20} c="#8f8f8f" /></TimelineGear>
      </Timeline>

      <Taskbar>
        <Weather>
          <svg width="32" height="28" viewBox="0 0 32 28">
            <circle cx="19" cy="8" r="7" fill="#f2a33a" />
            <path d="M7 27A6 6 0 0 1 6 15A8 8 0 0 1 20 12A6 6 0 0 1 27 19A4.500 4.500 0 0 1 26 27Z" fill="#b5cdf0" stroke="#e8f0fa" />
          </svg>
          <WeatherText>
            <div>32°C</div>
            <div>Mostly cloudy</div>
          </WeatherText>
        </Weather>
        <WinLogo />
        <SearchPill>
          <svg width="18" height="20" viewBox="0 0 18 20" fill="none" stroke="#222" strokeWidth="2">
            <circle cx="8" cy="8" r="6.500" />
            <path d="M12 13L17 19" />
          </svg>
          Search
          <SearchArt width="66" height="34" viewBox="700 1033 66 34">
            <path d="M703 1066L708 1058H756L760 1058L752 1066Z" fill="#e5c596" />
            <path d="M709 1048L720 1052L733 1046L735 1059L720 1063L711 1061Z" fill="#eef3e0" stroke="#4f9a5f" strokeWidth="1.2" />
            <path d="M721 1052L730 1040L733 1042L724 1054Z" fill="#f0a53c" />
            <path d="M730 1040L731 1038L734 1040L733 1042Z" fill="#e85a4a" />
            <path d="M739 1047C739 1042 742 1041 743 1040V1037H749V1040C751 1041 753 1042 753 1047V1063H739Z" fill="#2a6fd8" />
            <path d="M742 1056A4.500 4 0 0 1 750 1056V1060H742Z" fill="#62b8f0" />
            <path d="M705 1039L706.500 1042L709 1043L706.500 1044L705 1047L704 1044L701 1043L704 1042Z" fill="#c56be6" />
            <circle cx="734" cy="1052" r="1.500" fill="#59c8e8" />
            <circle cx="758" cy="1043" r="1.500" fill="#f2a83c" />
          </SearchArt>
        </SearchPill>
        {taskIcons.map((t, i) => (
          <TaskCell key={i} $dot={t.dot} $active={t.active}>{t.node}</TaskCell>
        ))}
        <Tray>
          <TrayCell $w={40}>
            <svg width="14" height="8" viewBox="0 0 14 8" fill="none">
              <path d="M1 7L7 1L13 7" stroke="#222" strokeWidth="1.4" />
            </svg>
          </TrayCell>
          <TrayCell $w={40}>
            <svg width="22" height="22" viewBox="0 0 22 22">
              <path d="M5 17A5 5 0 0 1 5 7A6 6 0 0 1 16 7A5 5 0 0 1 16 17Z" fill="#7d8285" />
              <circle cx="15" cy="16" r="6" fill="#f5e414" />
              <path d="M15 12V17M15 18.500V20" stroke="#222" strokeWidth="1.4" />
            </svg>
          </TrayCell>
          <TrayCell $w={60}>
            <div>ENG</div>
            <div>US</div>
          </TrayCell>
          <TrayCell $w={32}>
            <svg width="20" height="18" viewBox="0 0 20 18" fill="none" stroke="#222" strokeWidth="1.4">
              <path d="M1 6C6 1 14 1 19 6M4 9.500C7 6.500 13 6.500 16 9.500M7 13C8.500 11.500 11.500 11.500 13 13" />
              <circle cx="10" cy="16" r="1.200" fill="#222" />
            </svg>
          </TrayCell>
          <TrayCell $w={28}>
            <svg width="20" height="20" viewBox="0 0 20 20" fill="none" stroke="#222" strokeWidth="1.2">
              <path d="M1 7H4L9 2V18L4 13H1Z" />
              <path d="M12 6C13.500 8 13.500 12 12 14" />
              <path d="M15 3C18 7 18 13 15 17" stroke="#999" />
            </svg>
          </TrayCell>
          <TrayCell $w={30}>
            <svg width="20" height="22" viewBox="0 0 20 22">
              <rect x="2" y="6" width="16" height="12" rx="2" fill="none" stroke="#222" strokeWidth="1.4" />
              <rect x="4" y="8" width="10" height="8" fill="#222" />
              <path d="M6 0L2 8H6L4 14L10 6H6Z" fill="#222" />
            </svg>
          </TrayCell>
          <TrayCell $w={88} $align="flex-end">
            <div>3:34 pm</div>
            <div>12/5/2023</div>
          </TrayCell>
          <TrayCell $w={36}>
            <svg width="18" height="24" viewBox="0 0 18 24">
              <path d="M7 4A2 2 0 0 1 9 4C13 5 12 11 13 14L15 18H1L3 14C4 11 3 5 7 4ZM6 19H10A2 2 0 0 1 6 19Z" fill="#222" />
              <path d="M12 1H17L12 7H17" stroke="#222" strokeWidth="1.2" fill="none" />
            </svg>
          </TrayCell>
        </Tray>
      </Taskbar>
    </Page>
  );
}

export default App;
